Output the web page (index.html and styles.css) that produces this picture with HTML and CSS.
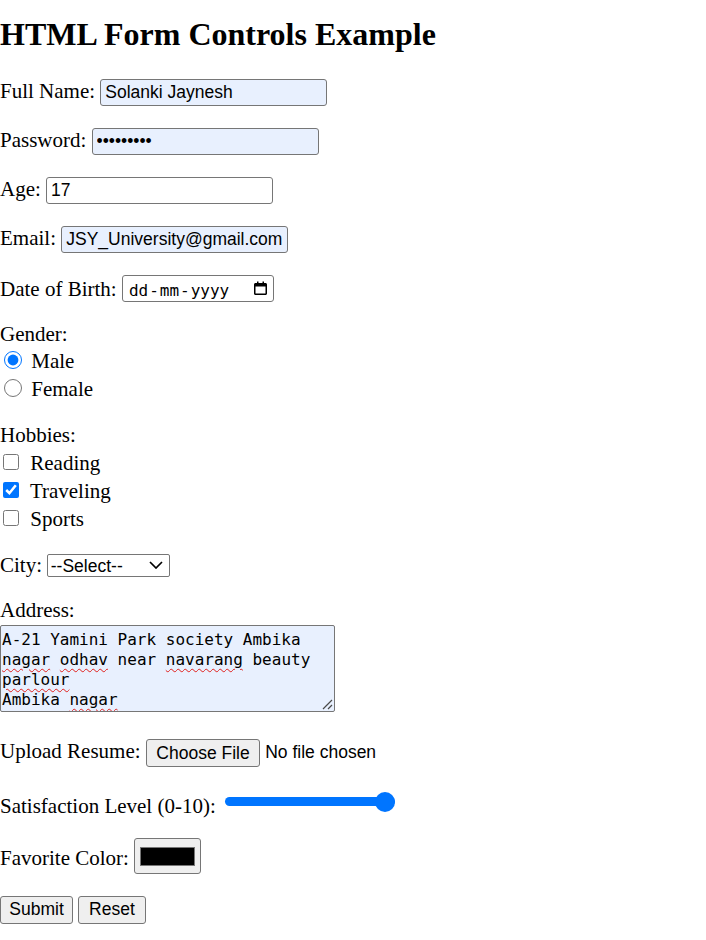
FILE: index.html
```html
<!DOCTYPE html>
<html lang="en">
<head>
<meta charset="utf-8">
<title>HTML Form Controls Example</title>
<link rel="stylesheet" href="styles.css">
</head>
<body>
<h1 class="title">HTML Form Controls Example</h1>
<form class="form" onsubmit="return false">
  <div class="row row-first"><label for="name">Full Name:</label> <input class="field autofill" id="name" type="text" value="Solanki Jaynesh"></div>
  <div class="row"><label for="pw">Password:</label> <input class="field autofill" id="pw" type="password" value="123456789"></div>
  <div class="row"><label for="age">Age:</label> <input class="field" id="age" type="text" value="17"></div>
  <div class="row"><label for="email">Email:</label> <input class="field autofill" id="email" type="text" value="JSY_University@gmail.com"></div>
  <div class="row"><label>Date of Birth:</label> <span class="date"><span class="date-text"><span class="seg">dd</span>-<span class="seg">mm</span>-<span class="seg">yyyy</span></span><svg class="date-icon" viewBox="0 0 15 15" aria-hidden="true"><path d="M12.5 2H11V0.5H9.5V2h-4V0.5H4V2H2.5C1.67 2 1 2.67 1 3.5v9c0 .83.67 1.5 1.5 1.5h10c.83 0 1.5-.67 1.5-1.5v-9C14 2.67 13.33 2 12.5 2zm0 10.5h-10V5.5h10v7z" fill="#000"/></svg></span></div>

  <div class="group group-gender">
    <div class="line">Gender:</div>
    <div class="line"><input type="radio" class="radio" id="male" name="gender" checked> <label for="male">Male</label></div>
    <div class="line"><input type="radio" class="radio" id="female" name="gender"> <label for="female">Female</label></div>
  </div>

  <div class="group group-hobbies">
    <div class="line">Hobbies:</div>
    <div class="line"><input type="checkbox" class="check" id="reading"> <label for="reading">Reading</label></div>
    <div class="line"><input type="checkbox" class="check" id="traveling" checked> <label for="traveling">Traveling</label></div>
    <div class="line"><input type="checkbox" class="check" id="sports"> <label for="sports">Sports</label></div>
  </div>

  <div class="row row-city"><label for="city">City:</label> <span class="select-wrap"><select class="select" id="city"><option>--Select--</option><option>Ahmedabad</option><option>Surat</option></select><svg class="chevron" viewBox="0 0 14 8" aria-hidden="true"><path d="M1 1l6 6 6-6" fill="none" stroke="#000" stroke-width="1.7"/></svg></span></div>

  <div class="row row-address">
    <label class="address-label">Address:</label>
    <div class="textbox">A-21 Yamini Park society Ambika <span class="typo">nagar</span> <span class="typo">odhav</span> near <span class="typo">navarang</span> beauty <span class="typo">parlour</span><br>Ambika <span class="typo">nagar</span><svg class="grip" viewBox="0 0 12 12" aria-hidden="true"><path d="M11 2L2 11M11 7L7 11" stroke="#4a4a4a" stroke-width="1.2" fill="none"/></svg></div>
  </div>

  <div class="row row-upload"><label for="resume">Upload Resume:</label> <input class="file" id="resume" type="file"></div>

  <div class="row row-range"><label for="level">Satisfaction Level (0-10):</label> <input class="range" id="level" type="range" min="0" max="10" value="10"></div>

  <div class="row row-color"><label for="fav">Favorite Color:</label> <input class="color" id="fav" type="color" value="#000000"></div>

  <div class="row row-buttons"><button class="btn" type="submit">Submit</button> <button class="btn btn-reset" type="reset">Reset</button></div>
</form>
</body>
</html>
```

FILE: styles.css
```css
html, body {
  background: #fff;
}

body {
  margin: 0;
  font-family: "Liberation Serif", "Times New Roman", serif;
  font-size: 21px;
  color: #000;
}

.title {
  margin: 16.2px 0 0;
  font-size: 32px;
  line-height: 36px;
  font-weight: bold;
}

.form {
  display: flex;
  flex-direction: column;
  align-items: flex-start;
}

.row {
  margin-top: 22px;
  white-space: nowrap;
}

.row-first {
  margin-top: 26.8px;
}

.field {
  box-sizing: border-box;
  width: 227px;
  height: 27px;
  margin: 0;
  padding: 0 4px;
  border: 1px solid #767676;
  border-radius: 3px;
  font: 17.5px "Liberation Sans", Arial, sans-serif;
  color: #000;
  background: #fff;
  outline: none;
  vertical-align: baseline;
}

.autofill {
  background: #e8f0fe;
}

/* date field */
.date {
  display: inline-flex;
  align-items: center;
  box-sizing: border-box;
  width: 152px;
  height: 27px;
  padding: 0 5px 0 5px;
  border: 1px solid #767676;
  border-radius: 3px;
  font: 16px "DejaVu Sans Mono", "Liberation Mono", monospace;
  background: #fff;
  vertical-align: baseline;
}

.date-text {
  flex: 1;
  padding-top: 3.3px;
  white-space: pre;
}

.seg {
  padding: 0 1px;
}

.date-icon {
  width: 15px;
  height: 15px;
  flex: none;
}

/* radio / checkbox groups */
.group {
  margin-top: 18.8px;
  line-height: 27.7px;
}

.group-hobbies {
  margin-top: 18.5px;
}

.line {
  white-space: nowrap;
}

.radio {
  width: 18px;
  height: 18px;
  margin: 0 4px 0 4px;
  vertical-align: -1px;
  accent-color: #0075ff;
}

.check {
  width: 16px;
  height: 16px;
  margin: 0 6px 0 3px;
  vertical-align: baseline;
  accent-color: #0075ff;
}

/* select */
.row-city {
  margin-top: 19.3px;
}

.select-wrap {
  display: inline-block;
  position: relative;
  vertical-align: baseline;
}

.select {
  -webkit-appearance: none;
  appearance: none;
  box-sizing: border-box;
  width: 123px;
  height: 23.3px;
  margin: 0;
  padding: 0 0 0 2.5px;
  border: 1px solid #767676;
  border-radius: 2px;
  font: 17.5px "Liberation Sans", Arial, sans-serif;
  color: #000;
  background: #fff;
}

.chevron {
  position: absolute;
  right: 7px;
  top: 8px;
  width: 14px;
  height: 8px;
  pointer-events: none;
}

/* address */
.row-address {
  margin-top: 20.8px;
}

.address-label {
  display: block;
}

.textbox {
  position: relative;
  box-sizing: border-box;
  width: 334.5px;
  height: 86.5px;
  margin-top: 2px;
  padding: 3.5px 2px 0 1px;
  border: 1px solid #767676;
  border-radius: 2px;
  background: #e8f0fe;
  font: 16px/20px "DejaVu Sans Mono", "Liberation Mono", monospace;
  white-space: normal;
  overflow: hidden;
}

.typo {
  text-decoration: underline wavy #e0201c;
  text-decoration-thickness: 1.4px;
  text-underline-offset: 3px;
}

.grip {
  position: absolute;
  right: 1px;
  bottom: 1px;
  width: 12px;
  height: 12px;
}

/* file */
.row-upload {
  margin-top: 27.5px;
}

.file {
  width: 245px;
  margin: 0;
  font: 17.5px "Liberation Sans", Arial, sans-serif;
  color: #000;
}

.file::file-selector-button {
  font: inherit;
  margin: 0 5px 0 0;
  padding: 2.3px 9.5px;
  border: 1px solid #767676;
  border-radius: 3px;
  background: #efefef;
  color: #000;
}

/* range */
.range {
  -webkit-appearance: none;
  appearance: none;
  width: 170px;
  height: 21px;
  margin: 2.6px 2px 0 4px;
  padding: 0;
  background: transparent;
  vertical-align: baseline;
}

.range::-webkit-slider-runnable-track {
  height: 9px;
  border-radius: 4.5px;
  background: #0075ff;
}

.range::-webkit-slider-thumb {
  -webkit-appearance: none;
  appearance: none;
  width: 20px;
  height: 20px;
  margin-top: -5.5px;
  border: none;
  border-radius: 50%;
  background: #0075ff;
}

/* color */
.row-color {
  margin-top: 20px;
}

.color {
  -webkit-appearance: none;
  appearance: none;
  box-sizing: border-box;
  width: 67px;
  height: 35.3px;
  margin: 0;
  padding: 0;
  border: 1px solid #767676;
  border-radius: 3px;
  background: #efefef;
  vertical-align: -0.9px;
}

.color::-webkit-color-swatch-wrapper {
  padding: 7.3px 5px 6.6px;
}

.color::-webkit-color-swatch {
  border: 1px solid #777;
  border-radius: 0;
}

/* buttons */
.btn {
  margin: 0;
  padding: 2.6px 8.3px;
  border: 1px solid #767676;
  border-radius: 3px;
  background: #efefef;
  font: 17.5px "Liberation Sans", Arial, sans-serif;
  color: #000;
}

.btn-reset {
  padding: 2.6px 9.8px;
}
```
